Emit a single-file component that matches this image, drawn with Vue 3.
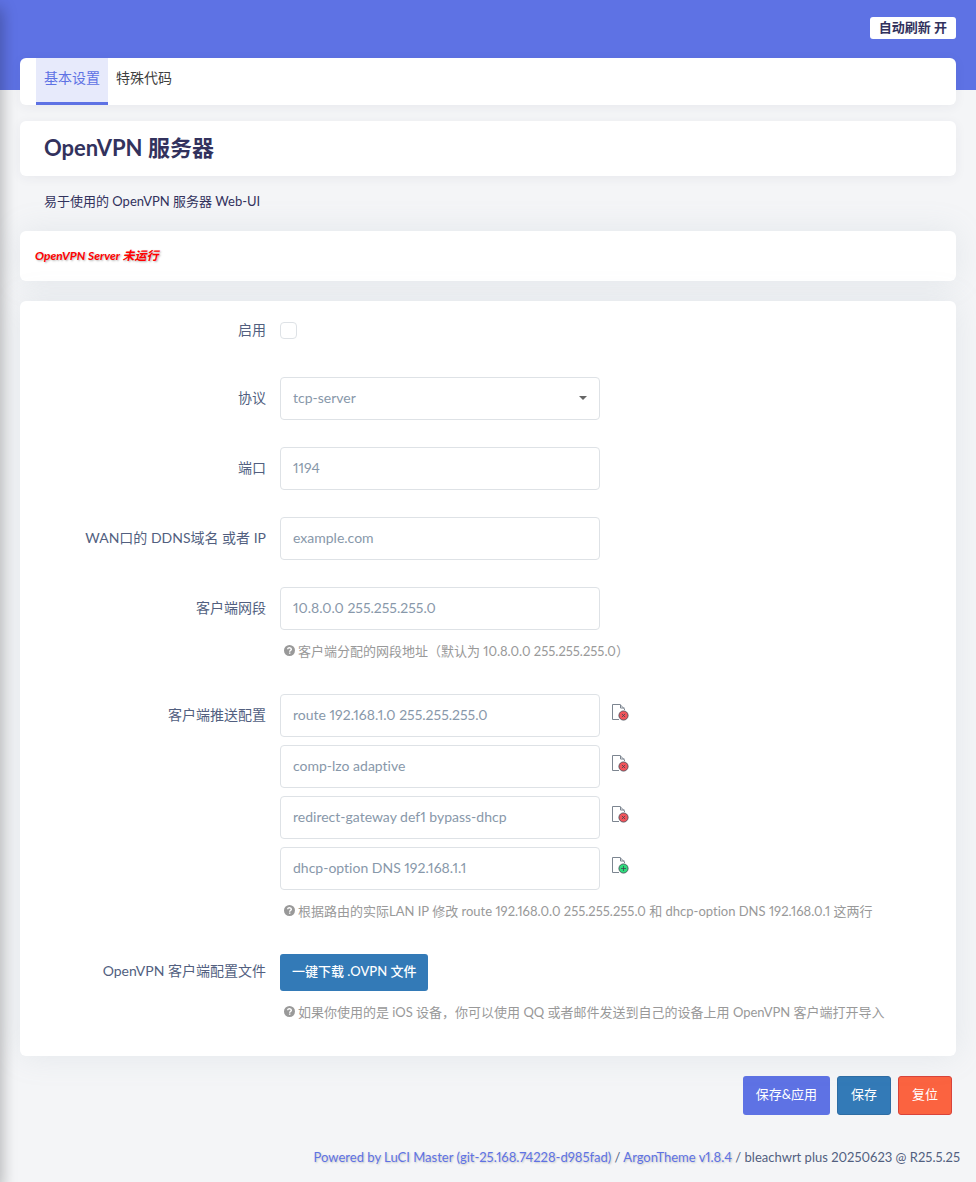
<script setup>
import { ref } from 'vue'

const enabled = ref(false)
const protocol = ref('tcp-server')
const port = ref('1194')
const ddns = ref('example.com')
const subnet = ref('10.8.0.0 255.255.255.0')
const pushOptions = ref([
  'route 192.168.1.0 255.255.255.0',
  'comp-lzo adaptive',
  'redirect-gateway def1 bypass-dhcp',
  'dhcp-option DNS 192.168.1.1'
])
const hints = {
  subnet: '客户端分配的网段地址（默认为 10.8.0.0 255.255.255.0）',
  push: '根据路由的实际LAN IP 修改 route 192.168.0.0 255.255.255.0 和 dhcp-option DNS 192.168.0.1 这两行',
  file: '如果你使用的是 iOS 设备，你可以使用 QQ 或者邮件发送到自己的设备上用 OpenVPN 客户端打开导入'
}

function editOption(index) {
  if (index === pushOptions.value.length - 1) pushOptions.value.push('')
  else pushOptions.value.splice(index, 1)
}
</script>

<template>
  <div class="page">
    <header class="band">
      <button type="button" class="refresh">自动刷新 开</button>
    </header>

    <main class="content">
      <nav class="card tabs">
        <a href="#basic" class="tab active">基本设置</a>
        <a href="#code" class="tab">特殊代码</a>
      </nav>

      <h2 class="card title">OpenVPN 服务器</h2>
      <p class="descr">易于使用的 OpenVPN 服务器 Web-UI</p>

      <section class="card raised status"><em>OpenVPN Server 未运行</em></section>

      <form class="card raised form" @submit.prevent>
        <div class="row">
          <label class="label" for="enabled">启用</label>
          <div class="value check-cell"><input id="enabled" v-model="enabled" type="checkbox" class="check"></div>
        </div>
        <div class="row">
          <label class="label" for="protocol">协议</label>
          <div class="value">
            <div class="select-box">
              <select id="protocol" v-model="protocol" class="field">
                <option>tcp-server</option>
                <option>udp</option>
              </select>
              <svg class="caret" viewBox="0 0 8 4" aria-hidden="true"><path d="M0 0h8L4 4z" /></svg>
            </div>
          </div>
        </div>
        <div class="row">
          <label class="label" for="port">端口</label>
          <div class="value"><input id="port" v-model="port" type="text" class="field"></div>
        </div>
        <div class="row">
          <label class="label" for="ddns">WAN口的 DDNS域名 或者 IP</label>
          <div class="value"><input id="ddns" v-model="ddns" type="text" class="field"></div>
        </div>
        <div class="row">
          <label class="label" for="subnet">客户端网段</label>
          <div class="value">
            <input id="subnet" v-model="subnet" type="text" class="field">
            <p class="hint">
              <svg class="help" viewBox="0 0 12 12" aria-hidden="true"><circle cx="6" cy="6" r="6" /><path d="M4.1 4.7c0-2.5 3.9-2.3 3.9 0C8 6 6.2 6 6.2 7.3M6.2 8.1v1.5" /></svg>
              <span>{{ hints.subnet }}</span>
            </p>
          </div>
        </div>
        <div class="row">
          <label class="label" for="push0">客户端推送配置</label>
          <div class="value">
            <div class="options">
              <div v-for="(option, i) in pushOptions" :key="i" class="option">
                <input :id="'push' + i" v-model="pushOptions[i]" type="text" class="field" :aria-label="'客户端推送配置 ' + (i + 1)">
                <button
                  type="button"
                  class="edit"
                  :aria-label="i === pushOptions.length - 1 ? '添加' : '删除'"
                  @click="editOption(i)"
                >
                  <svg viewBox="0 0 17 17" aria-hidden="true">
                    <path class="sheet" d="M7 15.5H.5V.5h7.500l4.500 4.500v1" />
                    <path class="sheet" d="M8.500.5v3.500h4" />
                    <g :class="i === pushOptions.length - 1 ? 'add' : 'remove'">
                      <circle cx="11.500" cy="11.500" r="4.600" />
                      <path v-if="i === pushOptions.length - 1" d="M11.500 9v5M9 11.500h5" />
                      <path v-else d="M9.900 9.900l3.200 3.200M13.100 9.900l-3.200 3.200" />
                    </g>
                  </svg>
                </button>
              </div>
            </div>
            <p class="hint">
              <svg class="help" viewBox="0 0 12 12" aria-hidden="true"><circle cx="6" cy="6" r="6" /><path d="M4.1 4.7c0-2.5 3.9-2.3 3.9 0C8 6 6.2 6 6.2 7.3M6.2 8.1v1.5" /></svg>
              <span>{{ hints.push }}</span>
            </p>
          </div>
        </div>
        <div class="row">
          <label class="label file-label" for="download">OpenVPN 客户端配置文件</label>
          <div class="value">
            <button id="download" type="button" class="btn download">一键下载 .OVPN 文件</button>
            <p class="hint">
              <svg class="help" viewBox="0 0 12 12" aria-hidden="true"><circle cx="6" cy="6" r="6" /><path d="M4.1 4.7c0-2.5 3.9-2.3 3.9 0C8 6 6.2 6 6.2 7.3M6.2 8.1v1.5" /></svg>
              <span>{{ hints.file }}</span>
            </p>
          </div>
        </div>
      </form>

      <div class="actions">
        <button type="button" class="btn apply">保存&amp;应用</button>
        <button type="button" class="btn save">保存</button>
        <button type="button" class="btn reset">复位</button>
      </div>
    </main>

    <footer class="footer">
      <a href="#luci">Powered by LuCI Master (git-25.168.74228-d985fad)</a> /
      <a href="#argon">ArgonTheme v1.8.4</a> / bleachwrt plus 20250623 @ R25.5.25
    </footer>
  </div>
</template>

<style>
body {
  margin: 0;
  background: #f4f5f7;
}
</style>

<style scoped>
.page,
.page button,
.page input,
.page select {
  font-family: Lato, "Noto Sans CJK SC", sans-serif;
  font-variant-ligatures: none;
  font-variant-numeric: proportional-nums;
}
.page {
  position: relative;
  min-height: 100vh;
  box-sizing: border-box;
  overflow: hidden;
  background: #f4f5f7;
  color: #32325d;
  font-size: 14px;
  line-height: 20px;
}
/* shadow cast by the off-canvas side menu */
.page::before {
  content: "";
  position: absolute;
  z-index: 2;
  top: 0;
  bottom: 0;
  left: -10px;
  width: 10px;
  box-shadow: 0 8px 16px rgba(0, 0, 0, 0.4);
  pointer-events: none;
}
.band {
  height: 90px;
  box-sizing: border-box;
  padding: 17px 20px 0;
  background: #5e72e4;
  display: flex;
  justify-content: flex-end;
  align-items: flex-start;
}
.refresh {
  height: 22px;
  padding: 0 9px 2px;
  border: 0;
  border-radius: 3px;
  background: #fff;
  color: #32325d;
  font-size: 13px;
  font-weight: 700;
  line-height: 20px;
}
.content {
  margin: -32px 20px 0;
}
.card {
  position: relative;
  box-sizing: border-box;
  border-radius: 6px;
  background: #fff;
  box-shadow: 0 2px 12px rgba(50, 50, 93, 0.06);
}
.raised {
  box-shadow: 0 0 32px rgba(136, 152, 170, 0.15);
}
.tabs {
  display: flex;
  height: 47px;
  padding: 0 16px;
}
.tab {
  padding: 10px 8px 0;
  border-bottom: 3px solid transparent;
  color: #404040;
  text-decoration: none;
}
.active {
  border-color: #5e72e4;
  background: #e7eafb;
  color: #5e72e4;
}
.title {
  margin: 16px 0 0;
  padding: 12px 24px 13px;
  font-size: 22px;
  line-height: 30px;
  font-weight: 700;
}
.descr {
  margin: 16px 24px 20px;
  font-size: 13px;
  line-height: 19px;
}
.status {
  padding: 15px;
  color: #f00;
  font-size: 12px;
  font-weight: 700;
  text-shadow: 1px 1px 2px rgba(0, 0, 0, 0.3);
}
.form {
  display: grid;
  gap: 27px;
  margin-top: 20px;
  padding: 8px 20px 28px 0;
}
.row {
  display: grid;
  grid-template-columns: 246px minmax(0, 1fr);
  gap: 14px;
}
.label {
  padding-top: 11px;
  color: #525f7f;
  text-align: right;
}
.file-label {
  padding-top: 7px;
}
.check-cell {
  height: 41px;
  display: flex;
  align-items: center;
}
.check {
  appearance: none;
  width: 17px;
  height: 17px;
  margin: 2px 0 0;
  border: 1px solid #dee2e6;
  border-radius: 4px;
  background: #fff;
}
.check:checked {
  background: #5e72e4;
}
.select-box {
  position: relative;
  max-width: 320px;
}
.field {
  display: block;
  appearance: none;
  box-sizing: border-box;
  width: 100%;
  max-width: 320px;
  height: 43px;
  margin: 0;
  padding: 0 12px 2px;
  border: 1px solid #dee2e6;
  border-radius: 4px;
  outline: 0;
  background: #fff;
  color: #8898aa;
  font-size: 14px;
}
.caret {
  position: absolute;
  right: 13px;
  top: 19px;
  width: 8px;
  height: 4px;
  fill: #666;
}
.options {
  display: grid;
  gap: 8px;
}
.option {
  display: flex;
  align-items: flex-start;
  gap: 12px;
}
.edit {
  flex: none;
  width: 17px;
  height: 17px;
  margin-top: 10px;
  padding: 0;
  border: 0;
  background: none;
}
.edit svg {
  display: block;
  width: 17px;
  height: 17px;
  fill: none;
}
.sheet {
  stroke: #7c8590;
}
.remove,
.add {
  stroke: #3d4652;
  stroke-width: 0.8;
}
.remove circle {
  fill: #f2545b;
}
.add circle {
  fill: #2fdc7c;
}
.hint {
  display: flex;
  align-items: flex-start;
  gap: 3px;
  margin: 0;
  padding: 12px 0 7px 4px;
  color: #999;
  font-size: 13px;
  line-height: 18px;
}
.help {
  flex: none;
  width: 11px;
  height: 11px;
  margin-top: 3px;
}
.help circle {
  fill: #999;
}
.help path {
  fill: none;
  stroke: #fff;
  stroke-width: 1.6;
}
.btn {
  box-sizing: border-box;
  height: 39px;
  padding: 0 13px 3px;
  border: 1px solid transparent;
  border-radius: 3px;
  color: #fff;
  font-size: 13px;
  line-height: 20px;
}
.download {
  display: block;
  height: 37px;
  padding: 0 11px 3px;
  background: #337ab7;
  font-weight: 500;
}
.actions {
  display: flex;
  justify-content: flex-end;
  gap: 7px;
  margin: 20px 4px 0;
}
.apply {
  padding: 0 12px 3px;
  background: #5e72e4;
}
.save {
  border-color: #2e6da4;
  background: #337ab7;
}
.reset {
  border-color: #d9433a;
  background: #fb6340;
}
.footer {
  margin-top: 32px;
  padding: 0 16px 15px;
  color: #525f7f;
  font-size: 13px;
  text-align: right;
}
.footer a {
  color: #5e72e4;
  text-decoration: none;
  text-shadow: 1px 1px 2px rgba(0, 0, 0, 0.2);
}
</style>
